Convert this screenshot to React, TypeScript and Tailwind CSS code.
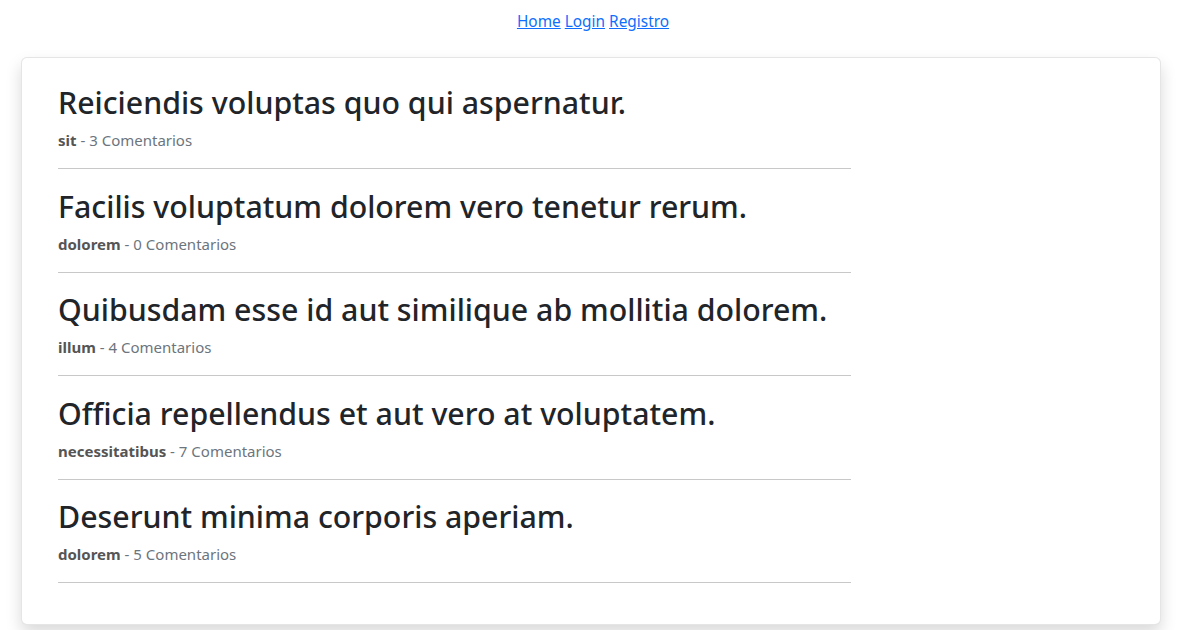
const POSTS = [
  { title: "Reiciendis voluptas quo qui aspernatur.", author: "sit", comments: 3 },
  { title: "Facilis voluptatum dolorem vero tenetur rerum.", author: "dolorem", comments: 0 },
  { title: "Quibusdam esse id aut similique ab mollitia dolorem.", author: "illum", comments: 4 },
  { title: "Officia repellendus et aut vero at voluptatem.", author: "necessitatibus", comments: 7 },
  { title: "Deserunt minima corporis aperiam.", author: "dolorem", comments: 5 },
];

export default function App() {
  return (
    <div className="min-h-screen bg-white text-[#212529] font-['Noto_Sans',sans-serif]">
      {/* Nav */}
      <nav className="pt-[10px] pb-[23px] text-center text-[15.4px] leading-6">
        <a href="#" className="text-[#0d6efd] underline">Home</a>{" "}
        <a href="#" className="text-[#0d6efd] underline">Login</a>{" "}
        <a href="#" className="text-[#0d6efd] underline">Registro</a>
      </nav>

      {/* Card */}
      <div className="mx-[21px] w-[1140px] rounded-md border border-black/10 bg-white shadow-[0_8px_16px_rgba(0,0,0,0.15)]">
        <div className="px-[36px] pt-[26px] pb-[41px]">
          <div className="w-[793px]">
            {POSTS.map((p, i) => (
              <div key={i} className={`border-b border-[#c8c8c8] pb-[16px] ${i > 0 ? "pt-[18.6px]" : ""}`}>
                <h2 className="text-[30.3px] leading-[38px] font-medium">{p.title}</h2>
                <p className="mt-[6px] text-[15px] leading-6 text-[#6c757d]">
                  <strong className="font-bold text-[#555]">{p.author}</strong> - {p.comments} Comentarios
                </p>
              </div>
            ))}
          </div>
        </div>
      </div>
    </div>
  );
}
